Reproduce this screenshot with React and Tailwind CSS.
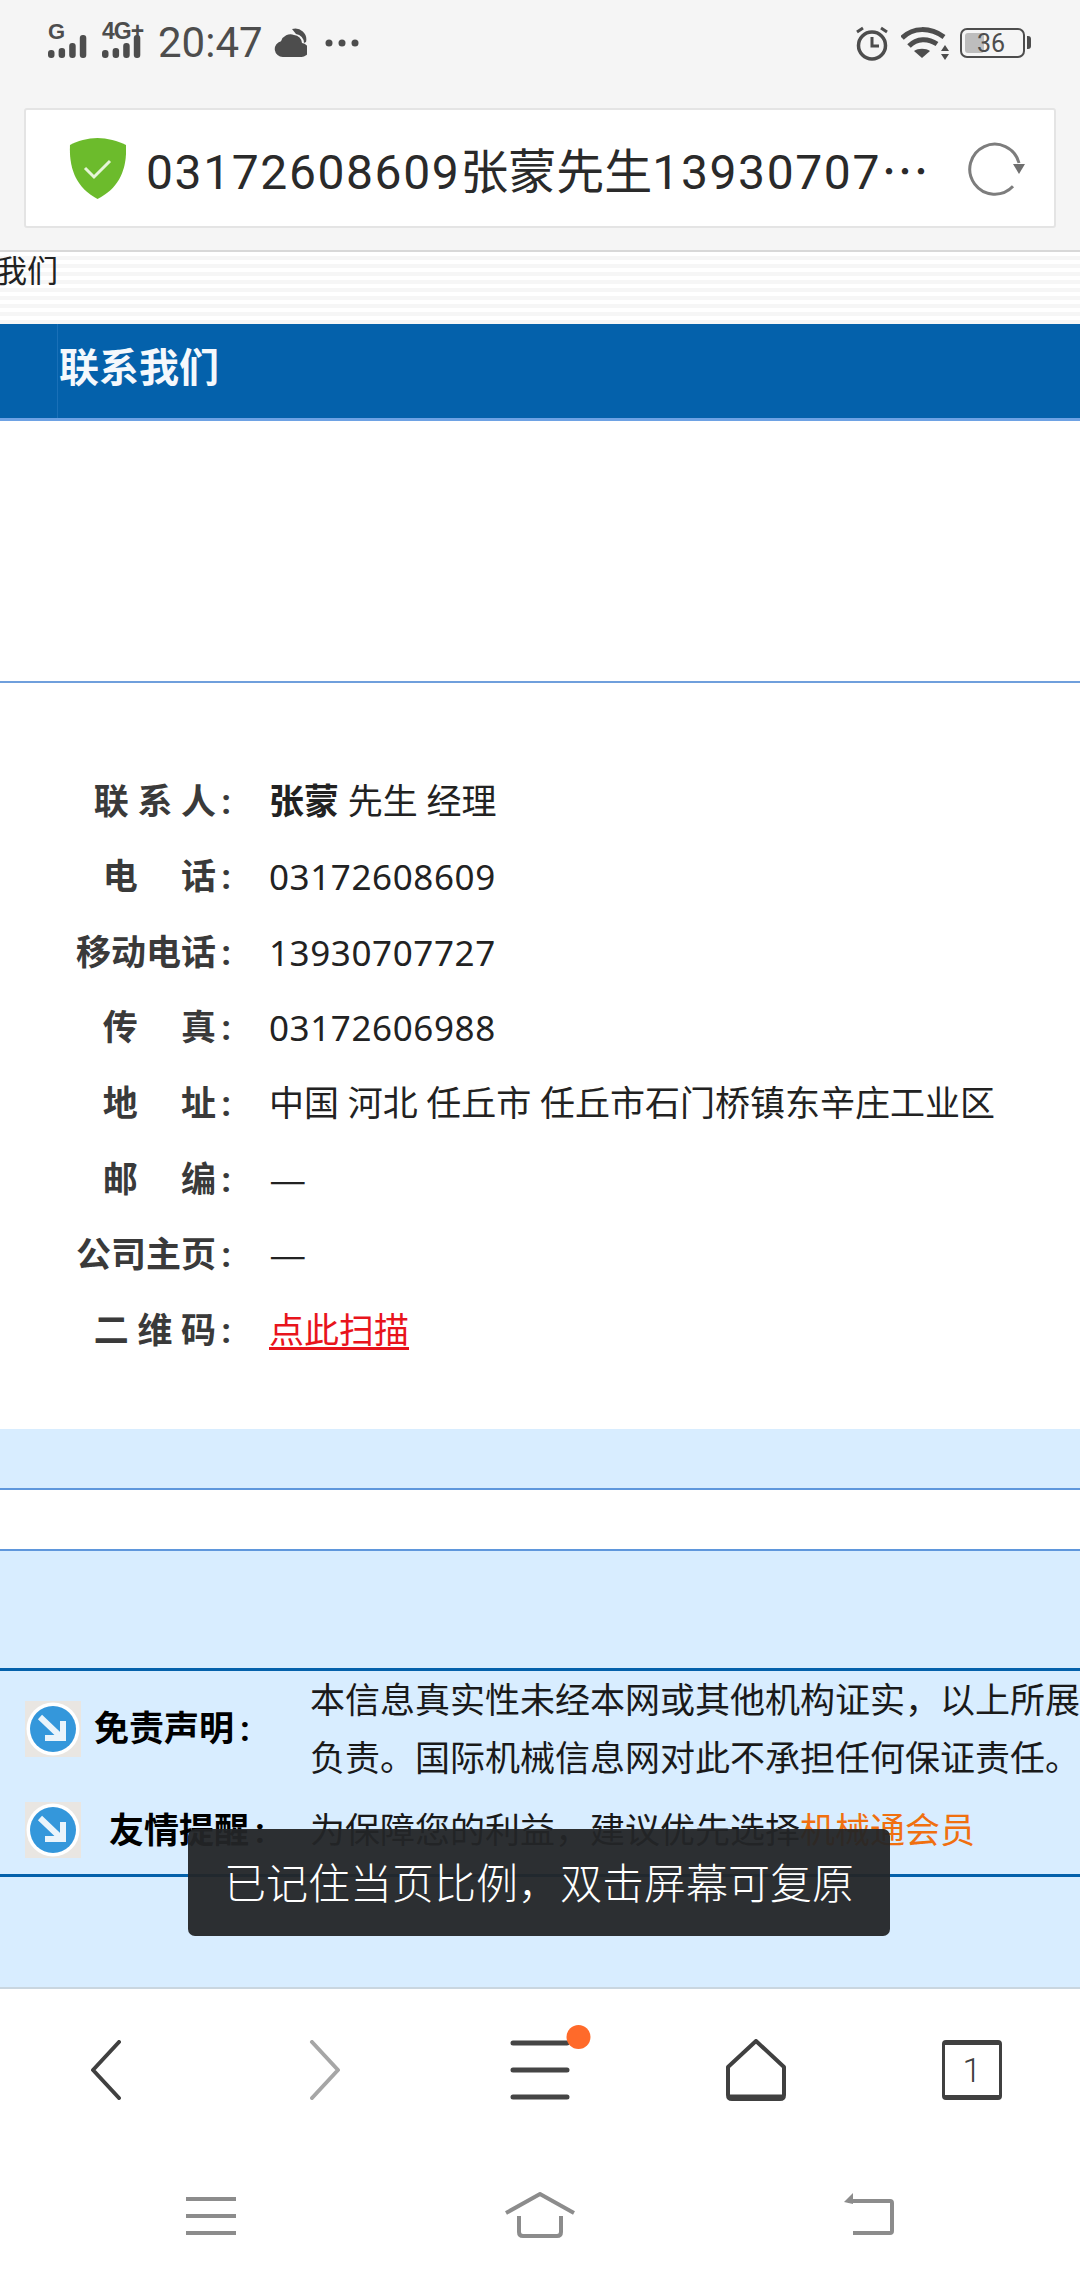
const CJK = "font-['Roboto','Noto_Sans_CJK_SC',sans-serif]";
const ONLY_CJK = "font-['Noto_Sans_CJK_SC',sans-serif]";
const DIGITS = "font-['Noto_Sans',sans-serif] tracking-[0.6px]";
const DASH = "block origin-left -translate-y-[3px] scale-x-[1.2] font-['Noto_Sans_CJK_SC',sans-serif]";

const ROWS = [
  { label: "联 系 人", value: <><b className="font-bold text-[#222]">张蒙</b> 先生 经理</> },
  { label: "电\u00a0\u00a0\u00a0\u00a0\u00a0话", value: <span className={DIGITS}>03172608609</span> },
  { label: "移动电话", value: <span className={DIGITS}>13930707727</span> },
  { label: "传\u00a0\u00a0\u00a0\u00a0\u00a0真", value: <span className={DIGITS}>03172606988</span> },
  { label: "地\u00a0\u00a0\u00a0\u00a0\u00a0址", value: "中国 河北 任丘市 任丘市石门桥镇东辛庄工业区" },
  { label: "邮\u00a0\u00a0\u00a0\u00a0\u00a0编", value: <span className={DASH}>—</span> },
  { label: "公司主页", value: <span className={DASH}>—</span> },
  { label: "二 维 码", value: <span className="text-[#e8141c] underline underline-offset-4">点此扫描</span> },
];

function SignalBars({ heights, color = "#4d4d4d" }) {
  return (
    <svg width="42" height="24" viewBox="0 0 42 24">
      {heights.map((h, i) => (
        <rect key={i} x={i * 10.6} y={24 - h} width="6.5" height={h} rx="3" fill={color} />
      ))}
    </svg>
  );
}

function StatusBar() {
  return (
    <div className="flex h-[72px] items-center bg-[#f5f5f5] pl-[48px] pr-[55px] pt-[14px] text-[#4d4d4d]">
      <div className="relative mb-[14px] h-[44px] w-[42px]">
        <span className="absolute left-0 top-[1px] font-['Liberation_Sans',sans-serif] text-[22px] font-bold">G</span>
        <div className="absolute bottom-0 left-0 flex"><SignalBars heights={[8, 10, 15, 23]} /></div>
      </div>
      <div className="relative mb-[14px] ml-[12px] h-[44px] w-[42px]">
        <span className="absolute left-0 top-0 whitespace-nowrap font-['Liberation_Sans',sans-serif] text-[23px] font-bold tracking-[-1px]">4G+</span>
        <div className="absolute bottom-0 left-0 flex"><SignalBars heights={[8, 10, 15, 23]} /></div>
      </div>
      <span className="ml-[14px] font-['Roboto',sans-serif] text-[42px] leading-none">20:47</span>
      <svg className="ml-[11px]" width="33" height="30" viewBox="0 0 33 30" fill="#4d4d4d">
        <path d="M9 29a8 8 0 0 1-2-15.800A10 10 0 0 1 20 7a8.500 8.500 0 0 1 8 8 7 7 0 0 1-1 14z" />
        <path d="M18 1a11 11 0 0 1 14 13l-2 1a9 9 0 0 0-8-9z" />
      </svg>
      <svg className="ml-[18px]" width="34" height="8" viewBox="0 0 34 8" fill="#4d4d4d">
        <circle cx="4" cy="4" r="3.500" /><circle cx="17" cy="4" r="3.500" /><circle cx="30" cy="4" r="3.500" />
      </svg>

      <div className="ml-auto flex items-center">
        <svg width="34" height="36" viewBox="0 0 34 36" fill="none" stroke="#4d4d4d" strokeWidth="3.500">
          <circle cx="17" cy="20.500" r="13.500" />
          <path d="M17 12v9h7M2 7l6-4M32 7l-6-4" strokeWidth="3" />
        </svg>
        <svg className="ml-[12px]" width="50" height="34" viewBox="0 0 50 34" fill="none" stroke="#4d4d4d" strokeWidth="5">
          <path d="M1 12C12 1 29 1 43 11" />
          <path d="M8 20C16 12 27 12 36 18" />
          <path d="M21 32l-8-7c4-3 12-3 16 0z" fill="#4d4d4d" stroke="none" />
          <path d="M44 19l4 6h-8zM44 34l4-6h-8z" fill="#4d4d4d" stroke="none" />
        </svg>
        <div className="relative ml-[9px] flex h-[30px] w-[65px] items-center rounded-[7px] border-[2.5px] border-[#4d4d4d]">
          <div className="absolute bottom-[3px] left-[3px] top-[3px] w-[19px] rounded-[3px] bg-[#bdbdbd]" />
          <span className="relative ml-[15px] font-['Roboto',sans-serif] text-[25px] leading-none">36</span>
          <div className="absolute right-[-8px] top-[6px] h-[13px] w-[4px] rounded-r-[3px] bg-[#4d4d4d]" />
        </div>
      </div>
    </div>
  );
}

function UrlBar() {
  return (
    <div className="h-[180px] border-b-2 border-[#d8d8d8] bg-[#f5f5f5] px-[24px] pt-[36px]">
      <div className="flex h-[120px] items-center rounded-[3px] border-2 border-[#e4e4e4] bg-white pl-[43px] pr-[30px]">
        <svg width="57" height="61" viewBox="0 0 57 61">
          <path d="M28.500 0C38 0 49 3 57 7c1 22-5 42-28.500 54C6 49 0 29 1 7 8 3 19 0 28.500 0z" fill="#6cbb2c" />
          <path d="M16 30l9 9 16-16" fill="none" stroke="#e6f5d8" strokeWidth="3" />
        </svg>
        <span className={`ml-[20px] mt-[4px] whitespace-nowrap text-[48px] leading-none text-[#2a2a2a] ${CJK}`}>
          <span className="tracking-[1.6px]">03172608609</span>张蒙先生<span className="tracking-[1.6px]">13930707</span><span className={ONLY_CJK}>…</span>
        </span>
        <svg className="ml-auto overflow-visible" width="56" height="52" viewBox="0 0 56 52" fill="none">
          <path d="M45 44.300A25 25 0 1 1 51 21" stroke="#7d7d7d" strokeWidth="3" />
          <path d="M45 22h12l-6 10z" fill="#6f6f6f" />
        </svg>
      </div>
    </div>
  );
}

function ArrowBadge() {
  return (
    <div className="flex h-[56px] w-[56px] shrink-0 items-center justify-center bg-[#e9e6e2]">
      <svg width="54" height="54" viewBox="0 0 54 54">
        <circle cx="27" cy="27" r="26.500" fill="#fff" />
        <circle cx="27" cy="27" r="23" fill="#3497db" />
        <path d="M14 15l22 21M37 19v17H19" fill="none" stroke="#eaf4fb" strokeWidth="6" />
      </svg>
    </div>
  );
}

function BrowserNav() {
  return (
    <div className="h-[293px] border-t-2 border-[#c9d6e0] bg-white">
      <div className="grid h-[151px] grid-cols-5 items-center pt-[11px]">
        <div className="flex justify-center pr-[4px]">
          <svg width="32" height="60" viewBox="0 0 32 60" fill="none" stroke="#404040" strokeWidth="4" strokeLinecap="round" strokeLinejoin="round">
            <path d="M29 2L3 30l26 28" />
          </svg>
        </div>
        <div className="flex justify-center pl-[2px]">
          <svg width="32" height="60" viewBox="0 0 32 60" fill="none" stroke="#a6a6a6" strokeWidth="4" strokeLinecap="round" strokeLinejoin="round">
            <path d="M3 2l26 28L3 58" />
          </svg>
        </div>
        <div className="flex justify-center">
          <svg className="overflow-visible" width="78" height="84" viewBox="0 0 78 84" fill="none">
            <path d="M12 15h54M12 42h54M12 69h54" stroke="#454545" strokeWidth="5" strokeLinecap="round" />
            <circle cx="77.500" cy="9" r="12" fill="#ff6a2a" />
          </svg>
        </div>
        <div className="flex justify-center">
          <svg width="60" height="62" viewBox="0 0 60 62" fill="none" stroke="#404040" strokeWidth="4" strokeLinejoin="round">
            <path d="M30 2L58 28v28q0 4-4 4H6q-4 0-4-4V28z" />
            <path d="M4 58h52" strokeWidth="5" />
          </svg>
        </div>
        <div className="flex justify-center">
          <div className="flex h-[60px] w-[60px] items-center justify-center rounded-[4px] border-x-[3.5px] border-y-[5px] border-[#404040] font-['Roboto',sans-serif] text-[34px] font-light leading-none text-[#404040]">1</div>
        </div>
      </div>
      <div className="grid h-[140px] grid-cols-3 px-[46px]">
        <div className="flex justify-center pt-[56px]">
          <svg width="50" height="40" viewBox="0 0 50 40" stroke="#8c8c8c" strokeWidth="4">
            <path d="M0 3h50M0 20h50M0 37h50" />
          </svg>
        </div>
        <div className="flex justify-center pt-[52px]">
          <svg width="70" height="46" viewBox="0 0 70 46" fill="none" stroke="#8c8c8c" strokeWidth="4" strokeLinejoin="round">
            <path d="M1 21L35 2l34 19" />
            <path d="M14 24v16q0 4 4 4h34q4 0 4-4V24" />
          </svg>
        </div>
        <div className="flex justify-center pt-[52px]">
          <svg width="50" height="44" viewBox="0 0 50 44" fill="none" stroke="#8c8c8c" strokeWidth="4">
            <path d="M4 9h42q2 0 2 2v28q0 2-2 2H9" />
            <path d="M0 10l9-9v11z" fill="#8c8c8c" stroke="none" />
          </svg>
        </div>
      </div>
    </div>
  );
}

export default function App() {
  return (
    <div className={`relative h-[2280px] w-[1080px] overflow-hidden bg-white ${CJK}`}>
      <StatusBar />
      <UrlBar />

      {/* page in the webview */}
      <div className="h-[72px] overflow-hidden bg-[repeating-linear-gradient(#ffffff_0px,#ffffff_4px,#f6f6f6_4px,#f6f6f6_8px)]">
        <p className="ml-[-4px] text-[31px] leading-[40px] text-[#222]">我们</p>
      </div>

      <div className="h-[97px] border-b-[3px] border-[#6ea2e4] bg-[#0461ab] pl-[57px]">
        <div className="h-full border-l border-[#1a70b8] pl-[1px] pt-[20px]">
          <h1 className="text-[40px] font-bold leading-[50px] text-[#f4f8fc]">联系我们</h1>
        </div>
      </div>

      <div className="h-[262px] border-b-2 border-[#6f9fdc] bg-white" />

      <div className="h-[746px] bg-white pt-[82px] text-[35px] text-[#222]">
        {ROWS.map((row) => (
          <div key={row.label} className="flex h-[75.6px] items-center">
            <div className="w-[231px] whitespace-pre text-right font-bold text-[#3a3a3a]">
              {row.label}<span className="ml-[5px]">:</span>
            </div>
            <div className="ml-[38px] whitespace-nowrap">{row.value}</div>
          </div>
        ))}
      </div>

      <div className="h-[61px] border-b-2 border-[#5f97dc] bg-[#d8edff]" />
      <div className="h-[61px] border-b-2 border-[#5f97dc] bg-white" />
      <div className="h-[120px] border-b-[3px] border-[#0461ab] bg-[#d8edff]" />

      <div className="h-[206px] border-b-[3px] border-[#0461ab] bg-[#d8edff] text-[35px] text-[#1a1a1a]">
        <div className="flex h-[116px] items-center pl-[25px]">
          <ArrowBadge />
          <b className="ml-[13px] mt-[2px] w-[216px] shrink-0 font-bold text-black">免责声明<span className="ml-[6px]">:</span></b>
          <div className="mt-[4px] whitespace-nowrap leading-[58px]">
            <p>本信息真实性未经本网或其他机构证实{"\uFF0C"}以上所展示的信息</p>
            <p>负责。国际机械信息网对此不承担任何保证责任。</p>
          </div>
        </div>
        <div className="flex h-[86px] items-center pl-[25px]">
          <ArrowBadge />
          <b className="ml-[28px] mt-[4px] w-[201px] shrink-0 font-bold text-black">友情提醒<span className="ml-[6px]">:</span></b>
          <p className="mt-[4px] whitespace-nowrap">为保障您的利益{"\uFF0C"}建议优先选择<span className="text-[#f07010]">机械通会员</span></p>
        </div>
      </div>

      <div className="h-[110px] bg-[#d8edff]" />
      <BrowserNav />

      {/* toast over the page */}
      <div className="absolute left-[188px] top-[1829px] flex h-[107px] w-[702px] items-center justify-center rounded-[7px] bg-[#232527]/95 pt-[4px] text-[42px] font-light text-white">
        已记住当页比例{"\uFF0C"}双击屏幕可复原
      </div>
    </div>
  );
}
